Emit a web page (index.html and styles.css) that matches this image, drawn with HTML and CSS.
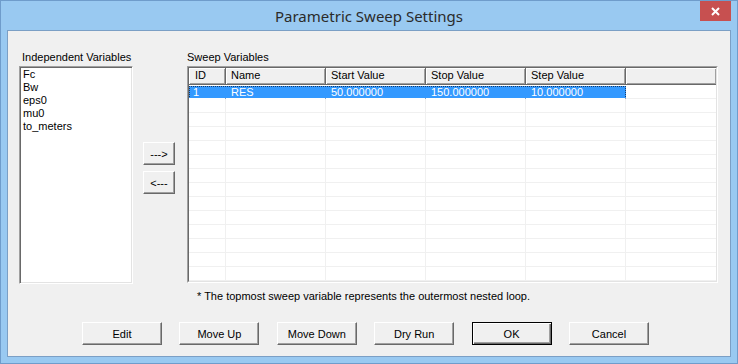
FILE: index.html
```html
<!DOCTYPE html>
<html>
<head lang="en">
  <meta charset="UTF-8">
  <title>Parametric Sweep Settings</title>
  <link rel="stylesheet" href="styles.css">
</head>
<body>
  <div class="window">
    <div class="titlebar">
      <span></span>
      <div class="title">Parametric Sweep Settings</div>
      <div class="close">
        <svg width="9" height="9" viewBox="0 0 9 9"><path d="M1 1L8 8M8 1L1 8" stroke="#fff" stroke-width="2"/></svg>
      </div>
    </div>
    <div class="client">
      <div class="main">
        <div class="col-left">
          <div class="label indent">Independent Variables</div>
          <ul class="listbox">
            <li>Fc</li>
            <li>Bw</li>
            <li>eps0</li>
            <li>mu0</li>
            <li>to_meters</li>
          </ul>
        </div>
        <div class="col-mid">
          <button class="btn arrow">---&gt;</button>
          <button class="btn arrow">&lt;---</button>
        </div>
        <div class="col-right">
          <div class="label">Sweep Variables</div>
          <div class="grid">
            <div class="grid-in">
              <div class="head">
                <div class="hc id">ID</div>
                <div class="hc">Name</div>
                <div class="hc">Start Value</div>
                <div class="hc">Stop Value</div>
                <div class="hc">Step Value</div>
                <div class="hc last"></div>
              </div>
              <div id="rows"></div>
            </div>
          </div>
        </div>
      </div>
      <div class="note">* The topmost sweep variable represents the outermost nested loop.</div>
      <div class="buttons">
        <button class="btn">Edit</button>
        <button class="btn">Move Up</button>
        <button class="btn">Move Down</button>
        <button class="btn">Dry Run</button>
        <button class="btn ok">OK</button>
        <button class="btn">Cancel</button>
      </div>
    </div>
  </div>
  <script>
    // one selected row + empty rows to fill the grid
    var data = [['1', 'RES', '50.000000', '150.000000', '10.000000']];
    var rows = document.getElementById('rows');
    for (var i = 0; i < 14; i++) {
      var row = document.createElement('div');
      row.className = 'row';
      var vals = data[i] || ['', '', '', '', ''];
      if (data[i]) {
        row.className += ' selected';
        var sel = document.createElement('div');
        sel.className = 'sel';
        row.appendChild(sel);
      }
      for (var j = 0; j < 6; j++) {
        var c = document.createElement('div');
        c.className = 'c' + (j == 0 ? ' id' : '') + (j == 5 ? ' last' : '');
        c.style.gridColumn = (j + 1);
        c.innerHTML = vals[j] || '';
        row.appendChild(c);
      }
      rows.appendChild(row);
    }
  </script>
</body>
</html>
```

FILE: styles.css
```css
* {
  margin: 0;
  padding: 0;
  box-sizing: border-box;
}
body {
  font-family: "Liberation Sans", Arial, sans-serif;
  font-size: 11px;
  color: #000;
  background: #fff;
}
ul {
  list-style: none;
}
.window {
  width: 738px;
  height: 364px;
  background: #99c9f1;
  border: 1px solid #6f9ccb;
  padding: 0 6px 6px 6px;
}
.titlebar {
  height: 29px;
  display: grid;
  grid-template-columns: 1fr auto 1fr;
  align-items: center;
}
.title {
  font-family: "Noto Sans", "Open Sans", sans-serif;
  font-size: 15px;
  color: #2b2b2b;
  padding-top: 1px;
}
.close {
  justify-self: end;
  align-self: start;
  width: 31px;
  height: 20px;
  background: #c75050;
  display: flex;
  align-items: center;
  justify-content: center;
}
.client {
  height: 327px;
  background: #f0f0f0;
  border: 1px solid #7b9fc5;
  padding: 19px 0 0 11px;
}
.main {
  display: flex;
  height: 233px;
}
.label {
  height: 14px;
  line-height: 14px;
  margin-bottom: 2px;
  white-space: nowrap;
}
.label.indent {
  padding-left: 3px;
}
.col-left {
  width: 114px;
}
.col-mid {
  width: 32px;
  margin-left: 10px;
  padding-top: 92px;
  display: flex;
  flex-direction: column;
  gap: 6px;
}
.col-right {
  width: 531px;
  margin-left: 12px;
}
.listbox {
  height: 218px;
  background: #fff;
  border: 1px solid;
  border-color: #a0a0a0 #fff #fff #a0a0a0;
  box-shadow: inset 1px 1px 0 #696969, inset -1px -1px 0 #e3e3e3;
  padding: 1px 0 0 3px;
}
.listbox li {
  height: 13px;
  line-height: 13px;
}
.grid {
  height: 217px;
  border: 1px solid;
  border-color: #a0a0a0 #fff #fff #a0a0a0;
  background: #fff;
}
.grid-in {
  height: 100%;
  border: 1px solid;
  border-color: #696969 #e3e3e3 #e3e3e3 #696969;
  overflow: hidden;
}
.head, .row {
  display: grid;
  grid-template-columns: 37px 100px 100px 100px 100px 1fr;
}
.hc {
  height: 17px;
  line-height: 15px;
  background: #f0f0f0;
  border-right: 1px solid #696969;
  border-bottom: 1px solid #696969;
  box-shadow: inset 1px 1px 0 #fff, inset -1px -1px 0 #a0a0a0;
  padding-left: 5px;
  white-space: nowrap;
}
.hc.id {
  padding-left: 6px;
}
.hc.last {
  border-right: none;
}
.row {
  height: 14px;
}
.c {
  grid-row: 1;
  height: 14px;
  line-height: 13px;
  padding-left: 5px;
  border-right: 1px solid #f0f0f0;
  border-bottom: 1px solid #f0f0f0;
  white-space: nowrap;
}
.c.id {
  padding-left: 4px;
}
.c.last {
  border-right: none;
}
.row .sel {
  grid-row: 1;
  grid-column: 1 / 6;
  height: 13px;
  margin-top: 1px;
  background: #3399ff;
  border: 1px dotted #1a3b66;
}
.selected .c {
  color: #fff;
  border-right-color: transparent;
  border-bottom-color: #fff;
  padding-top: 1px;
}
.selected .c.last {
  border-bottom-color: #f0f0f0;
}
.btn {
  font-family: "Liberation Sans", Arial, sans-serif;
  font-size: 11px;
  color: #000;
  background: #f0f0f0;
  border: 1px solid;
  border-color: #fff #696969 #696969 #fff;
  box-shadow: inset -1px -1px 0 #a0a0a0;
}
.arrow {
  width: 32px;
  height: 23px;
}
.note {
  margin-top: 7px;
  padding-left: 178px;
  height: 13px;
  line-height: 13px;
}
.buttons {
  display: flex;
  gap: 17.4px;
  margin-top: 19px;
  padding-left: 63px;
}
.buttons .btn {
  width: 80px;
  height: 23px;
}
.buttons .ok {
  border: 1px solid #000;
  box-shadow: inset 1px 1px 0 #fff, inset -1px -1px 0 #696969, inset -2px -2px 0 #a0a0a0;
}
```
